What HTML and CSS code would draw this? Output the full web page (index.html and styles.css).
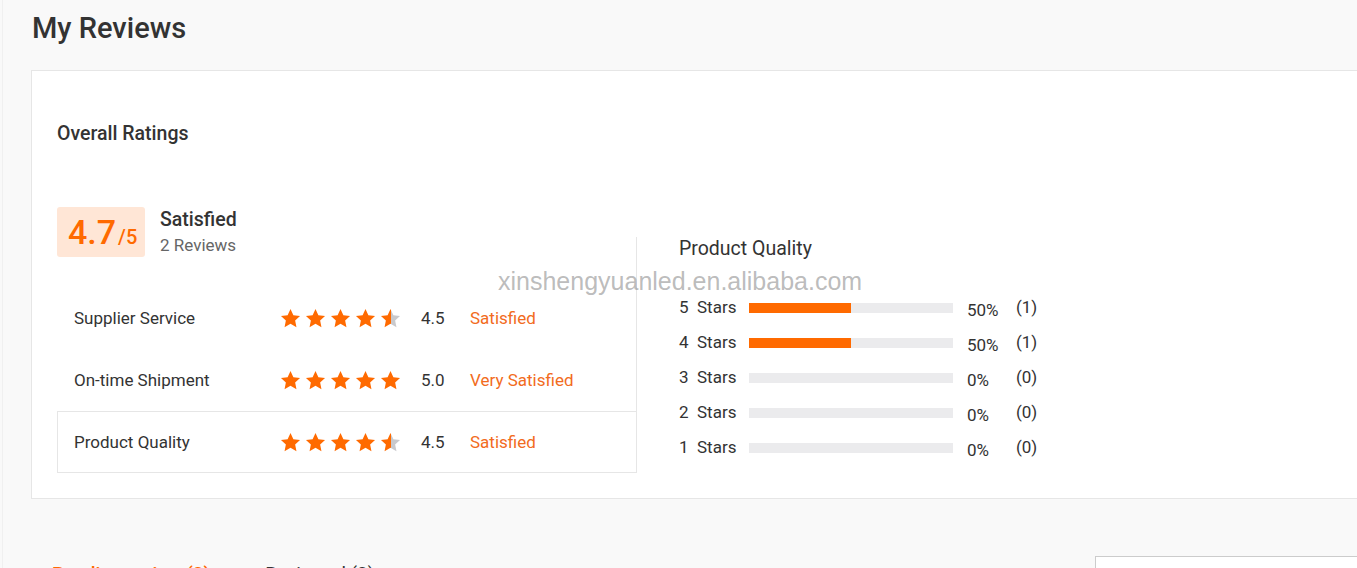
FILE: index.html
```html
<!DOCTYPE html>
<html lang="en">
<head>
<meta charset="utf-8">
<title>My Reviews</title>
<link rel="stylesheet" href="styles.css">
</head>
<body>
<svg width="0" height="0" class="defs" aria-hidden="true">
  <defs>
    <symbol id="star" viewBox="0 0 24 24"><path d="M12 1.2l3.3 7 7.6.9-5.6 5.2 1.5 7.6L12 18.1l-6.8 3.8 1.5-7.6L1.1 9.1l7.6-.9z"/></symbol>
    <linearGradient id="half" x1="0" x2="1" y1="0" y2="0">
      <stop offset="50%" stop-color="#ff6a00"/>
      <stop offset="50%" stop-color="#c9c9cc"/>
    </linearGradient>
  </defs>
</svg>
<div class="page">
  <h1 class="title">My Reviews</h1>
  <section class="card">
    <h2 class="card-title">Overall Ratings</h2>
    <div class="overview">
      <div class="left">
        <div class="summary">
          <div class="score-box"><span class="score">4.7</span><span class="of">/5</span></div>
          <div class="summary-text">
            <div class="summary-label">Satisfied</div>
            <div class="summary-count">2 Reviews</div>
          </div>
        </div>
        <div class="rows">
          <div class="row">
            <span class="row-label">Supplier Service</span>
            <span class="stars">
              <svg class="star"><use href="#star"/></svg><svg class="star"><use href="#star"/></svg><svg class="star"><use href="#star"/></svg><svg class="star"><use href="#star"/></svg><svg class="star half"><use href="#star"/></svg>
            </span>
            <span class="row-score">4.5</span>
            <span class="row-text">Satisfied</span>
          </div>
          <div class="row">
            <span class="row-label">On-time Shipment</span>
            <span class="stars">
              <svg class="star"><use href="#star"/></svg><svg class="star"><use href="#star"/></svg><svg class="star"><use href="#star"/></svg><svg class="star"><use href="#star"/></svg><svg class="star"><use href="#star"/></svg>
            </span>
            <span class="row-score">5.0</span>
            <span class="row-text">Very Satisfied</span>
          </div>
          <div class="row active">
            <span class="row-label">Product Quality</span>
            <span class="stars">
              <svg class="star"><use href="#star"/></svg><svg class="star"><use href="#star"/></svg><svg class="star"><use href="#star"/></svg><svg class="star"><use href="#star"/></svg><svg class="star half"><use href="#star"/></svg>
            </span>
            <span class="row-score">4.5</span>
            <span class="row-text">Satisfied</span>
          </div>
        </div>
      </div>
      <div class="right">
        <h3 class="dist-title">Product Quality</h3>
        <div class="dist">
          <div class="dist-row"><span class="dist-label"><span class="n">5</span>Stars</span><span class="bar"><span class="fill" style="width:50%"></span></span><span class="pct">50%</span><span class="cnt">(1)</span></div>
          <div class="dist-row"><span class="dist-label"><span class="n">4</span>Stars</span><span class="bar"><span class="fill" style="width:50%"></span></span><span class="pct">50%</span><span class="cnt">(1)</span></div>
          <div class="dist-row"><span class="dist-label"><span class="n">3</span>Stars</span><span class="bar"><span class="fill" style="width:0%"></span></span><span class="pct">0%</span><span class="cnt">(0)</span></div>
          <div class="dist-row"><span class="dist-label"><span class="n">2</span>Stars</span><span class="bar"><span class="fill" style="width:0%"></span></span><span class="pct">0%</span><span class="cnt">(0)</span></div>
          <div class="dist-row"><span class="dist-label"><span class="n">1</span>Stars</span><span class="bar"><span class="fill" style="width:0%"></span></span><span class="pct">0%</span><span class="cnt">(0)</span></div>
        </div>
      </div>
    </div>
  </section>
  <div class="toolbar">
    <div class="tabs">
      <span class="tab on">Pending review (2)</span>
      <span class="tab">Reviewed (2)</span>
    </div>
    <div class="search"></div>
  </div>
  <div class="watermark">xinshengyuanled.en.alibaba.com</div>
</div>
</body>
</html>
```
FILE: styles.css
```css
html, body {
  margin: 0;
  padding: 0;
}
body {
  background: #f9f9f9;
  font-family: Roboto, "Liberation Sans", Arial, sans-serif;
  color: #333;
  width: 1357px;
  height: 568px;
  overflow: hidden;
}
.defs {
  position: absolute;
  width: 0;
  height: 0;
}
.page {
  position: relative;
  border-left: 1px solid #f0f0f0;
  margin-left: 2px;
  padding-left: 28px;
  min-height: 568px;
}
.title {
  margin: 0;
  padding-top: 9px;
  padding-left: 1px;
  font-size: 29px;
  line-height: 38px;
  font-weight: 500;
  color: #333;
}
.card {
  margin-top: 23px;
  width: 1360px;
  background: #fff;
  border: 1px solid #e6e6e6;
  padding: 51px 0 25px 25px;
  box-sizing: border-box;
}
.card-title {
  margin: 0;
  font-size: 19.5px;
  line-height: 24px;
  font-weight: 500;
  color: #333;
}
.overview {
  display: flex;
  margin-top: 61px;
}
.left {
  width: 580px;
  position: relative;
}
.left::after {
  content: "";
  position: absolute;
  right: 0;
  top: 30px;
  bottom: 0;
  width: 1px;
  background: #e6e6e6;
}
.summary {
  display: flex;
  align-items: flex-start;
}
.score-box {
  width: 88px;
  height: 50px;
  box-sizing: border-box;
  background: #ffe6d6;
  border-radius: 3px;
  padding-left: 11px;
  display: flex;
  align-items: baseline;
  color: #ff6a00;
  line-height: 50px;
}
.score {
  font-size: 34px;
  font-weight: 500;
}
.of {
  font-size: 20px;
  font-weight: 500;
  margin-left: 2px;
}
.summary-text {
  margin-left: 15px;
  padding-top: 1px;
}
.summary-label {
  font-size: 19.5px;
  line-height: 24px;
  font-weight: 500;
  color: #333;
}
.summary-count {
  font-size: 17px;
  line-height: 24px;
  color: #666;
  margin-top: 1px;
}
.rows {
  margin-top: 30px;
}
.row {
  display: flex;
  align-items: center;
  box-sizing: border-box;
  height: 62px;
  padding-left: 16px;
  border: 1px solid transparent;
  border-right: 0;
  font-size: 17px;
}
.row.active {
  border-color: #e6e6e6;
}
.row-label {
  width: 206px;
  color: #333;
}
.stars {
  display: flex;
  gap: 4px;
  width: 121px;
}
.star {
  width: 21px;
  height: 21px;
  fill: #ff6a00;
}
.star.half {
  fill: url(#half);
}
.row-score {
  margin-left: 20px;
  width: 49px;
  color: #333;
}
.row-text {
  color: #f26b21;
}
.right {
  padding-left: 42px;
  padding-top: 30px;
}
.dist-title {
  margin: 0;
  font-size: 19.5px;
  line-height: 24px;
  font-weight: 400;
  color: #333;
}
.dist {
  margin-top: 33px;
}
.dist-row {
  display: flex;
  align-items: center;
  height: 35px;
  font-size: 17px;
  color: #333;
  margin-top: -5px;
}
.dist-row + .dist-row {
  margin-top: 0;
}
.dist-label {
  width: 70px;
  display: flex;
}
.n {
  width: 18px;
}
.bar {
  width: 204px;
  height: 10px;
  background: #ebebed;
  display: flex;
  margin-top: 2px;
}
.fill {
  background: #ff6a00;
  height: 100%;
}
.pct {
  margin-left: 14px;
  width: 49px;
  padding-top: 6px;
}
.cnt {
  padding-top: 1px;
}
.toolbar {
  display: flex;
  justify-content: space-between;
  align-items: flex-start;
  margin-top: 57px;
}
.tabs {
  display: flex;
  gap: 55px;
  padding-left: 21px;
  padding-top: 6px;
}
.tab {
  font-size: 19px;
  line-height: 24px;
  color: #333;
}
.tab.on {
  color: #ff6a00;
  font-weight: 500;
}
.search {
  width: 280px;
  height: 32px;
  background: #fff;
  border: 1px solid #ccc;
  margin-right: -20px;
}
.watermark {
  position: absolute;
  left: 495px;
  top: 267px;
  font-family: "Liberation Sans", Arial, sans-serif;
  font-size: 25px;
  color: rgba(150, 150, 150, 0.65);
  pointer-events: none;
}
```
